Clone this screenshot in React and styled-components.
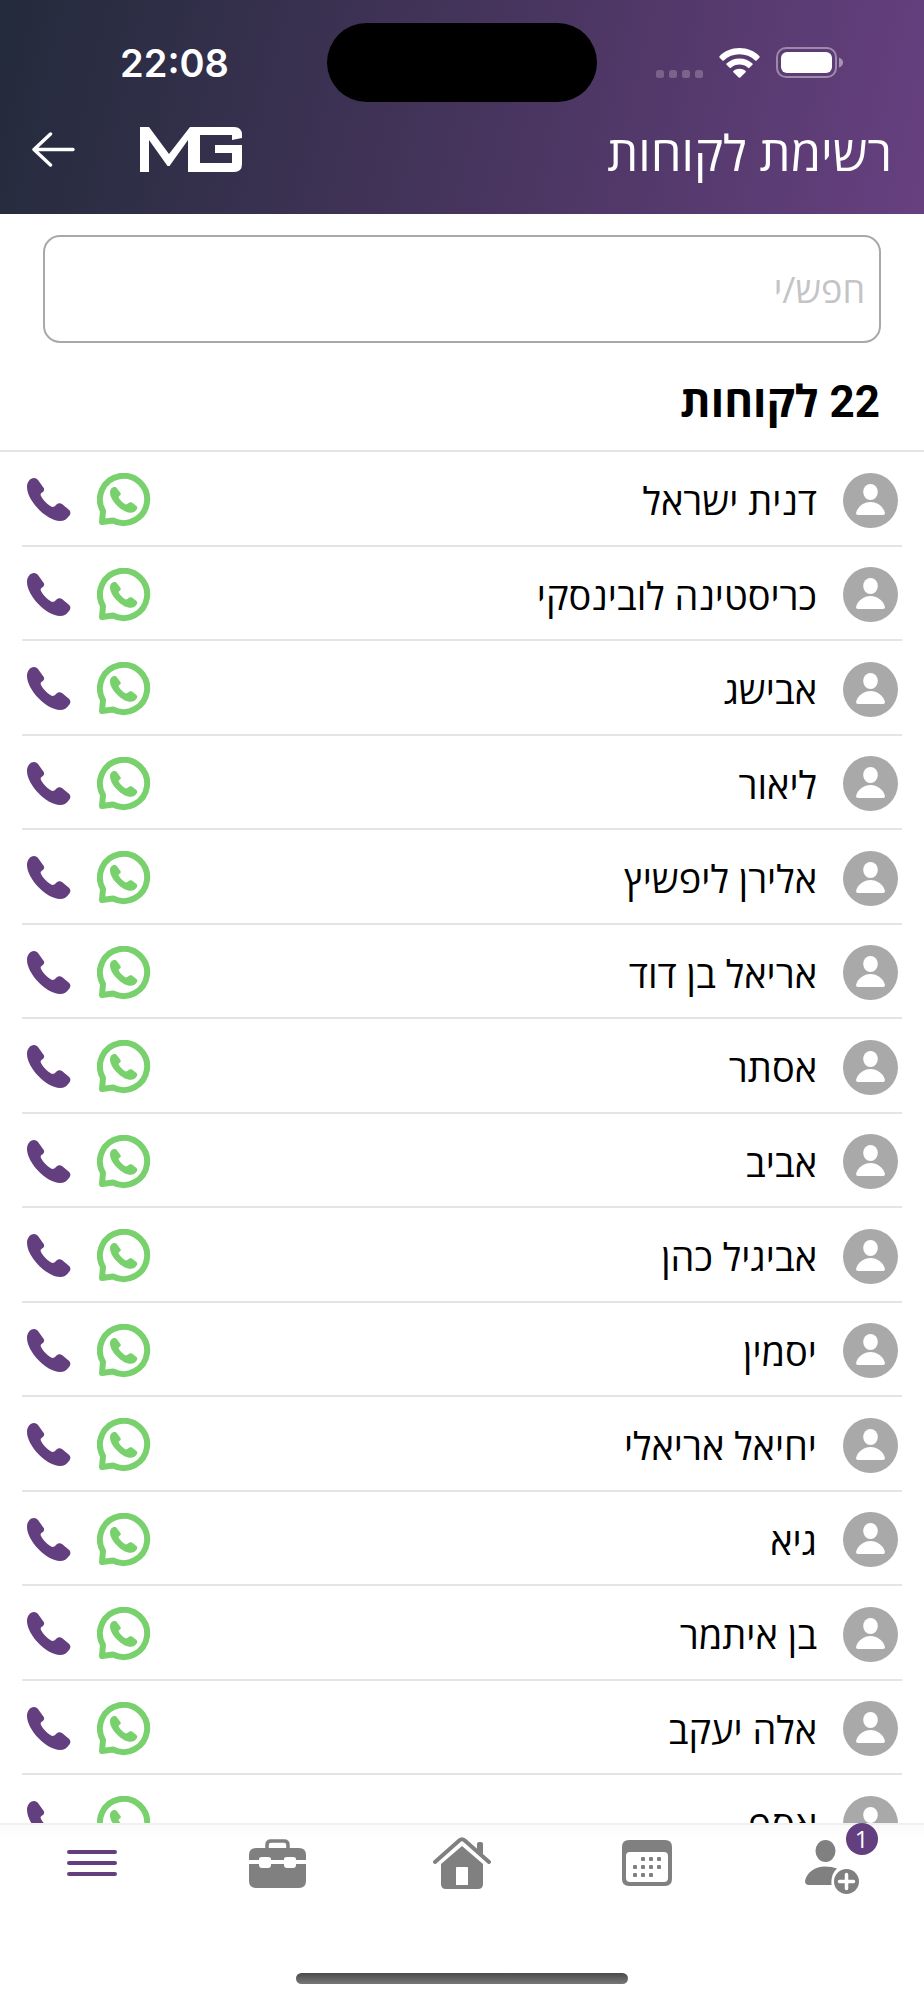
import React, { useState } from 'react';
import styled, { createGlobalStyle } from 'styled-components';

const GlobalStyle = createGlobalStyle`
  * {
    box-sizing: border-box;
  }
  body {
    margin: 0;
    background: #fff;
    color: #000;
    font-family: 'Open Sans', 'Liberation Sans', sans-serif;
  }
  button,
  input {
    font: inherit;
  }
`;

const Screen = styled.div`
  display: flex;
  flex-direction: column;
  height: 100vh;
  overflow: hidden;
`;

const Header = styled.header`
  flex: none;
  padding: 23px 0 18px;
  color: #fff;
  background: linear-gradient(103deg, #232b3b 0%, #45345c 50%, #674080 100%);
`;

const StatusBar = styled.div`
  display: grid;
  grid-template-columns: 1fr 270px 1fr;
  align-items: center;
  height: 79px;
`;

const Clock = styled.time`
  padding-left: 22px;
  text-align: center;
  font-family: 'Inter', sans-serif;
  font-size: 38px;
  line-height: 44px;
  font-weight: 600;
`;

const Island = styled.div`
  height: 79px;
  border-radius: 40px;
  background: #000;
`;

const StatusIcons = styled.div`
  display: flex;
  justify-content: flex-end;
  align-items: center;
  gap: 16px;
  padding-right: 81px;
`;

const TitleBar = styled.div`
  display: flex;
  align-items: center;
  height: 94px;
  padding: 0 32px;
`;

const Title = styled.h1`
  flex: 1;
  margin: 0;
  padding-top: 6px;
  font-size: 49px;
  line-height: 60px;
  font-weight: 400;
`;

const IconButton = styled.button`
  display: flex;
  padding: 0;
  border: 0;
  background: none;
  color: inherit;
`;

const Brand = styled.div`
  display: flex;
  margin-left: 65px;
`;

const SearchBox = styled.form`
  flex: none;
  padding: 21px 43px 0;
`;

const SearchInput = styled.input`
  display: block;
  width: 100%;
  height: 108px;
  padding: 0 14px;
  border: 2px solid #a9a9a9;
  border-radius: 17px;
  background: #fff;
  font-size: 36px;
  outline: none;

  &::placeholder {
    color: #c4c4c6;
    opacity: 1;
  }
`;

const Count = styled.h2`
  flex: none;
  display: flex;
  align-items: center;
  height: 109px;
  margin: 0;
  padding: 6px 44px 0;
  border-bottom: 2px solid #e4e4e4;
  font-family: 'Roboto', 'Open Sans', sans-serif;
  font-size: 44px;
  font-weight: 700;
`;

const List = styled.ul`
  flex: 1;
  min-height: 0;
  display: grid;
  grid-auto-rows: 95px 94px;
  margin: 0;
  padding: 0 22px;
  overflow-y: auto;
  scrollbar-width: none;
  list-style: none;
`;

const Row = styled.li`
  display: flex;
  align-items: center;
  gap: 26px;
  padding: 3px 4px 0 5px;
  border-bottom: 2px solid #e4e4e4;
`;

const Name = styled.span`
  flex: 1;
  font-size: 38px;
  line-height: 48px;
`;

const ActionLink = styled.a`
  display: flex;
  color: ${(props) => props.$color};
`;

const TabBar = styled.nav`
  flex: none;
  display: grid;
  grid-template-columns: repeat(5, 1fr);
  justify-items: center;
  align-items: center;
  height: 78px;
  border-top: 2px solid #f0f0f0;
  background: linear-gradient(#fafafa 0, #fff 14px);
`;

const Tab = styled(IconButton)`
  position: relative;
  color: ${(props) => (props.$active ? '#643f80' : '#808080')};
`;

const Badge = styled.span`
  position: absolute;
  top: -9px;
  right: -19px;
  width: 32px;
  border-radius: 16px;
  background: #643f80;
  color: #fff;
  font-size: 24px;
  line-height: 32px;
  text-align: center;
`;

const HomeArea = styled.div`
  flex: none;
  display: flex;
  justify-content: center;
  align-items: flex-end;
  height: 99px;
  padding-bottom: 16px;
`;

const HomeIndicator = styled.div`
  width: 36%;
  height: 11px;
  border-radius: 6px;
  background: linear-gradient(#4a4a4a, #787878);
`;

const PHONE =
  'M0 9C0 4 3 0 7 0C9 0 10 1 11 2L16 9C18 11 17 13 16 14C14 15 13 16 14 18C16 22 21 27 25 29C27 29 28 28 29 27C31 25 33 25 35 26L41 31C44 33 44 36 42 38C40 41 37 43 33 43C20 43 0 23 0 9Z';

const PhoneIcon = () => (
  <svg width="44" height="44" viewBox="0 0 44 44" fill="currentColor" aria-hidden="true">
    <path d={PHONE} />
  </svg>
);

const WhatsAppIcon = () => (
  <svg width="54" height="54" viewBox="0 0 54 54" aria-hidden="true">
    <path
      d="M6 38A23.6 23.6 0 1 1 16 47.5L5 49Z"
      fill="none"
      stroke="currentColor"
      strokeWidth="6"
      strokeLinejoin="round"
    />
    <path d={PHONE} transform="translate(13 14) scale(.63 .6)" fill="currentColor" />
  </svg>
);

const AvatarIcon = () => (
  <svg width="55" height="55" viewBox="0 0 55 55" aria-hidden="true">
    <circle cx="27.5" cy="27.5" r="27.5" fill="#a9a9a9" />
    <ellipse cx="27.5" cy="19" rx="7.3" ry="8" fill="#fff" />
    <path d="M13 40C15 33 21 29 27.5 29S40 33 42 40Q42 42 40 42H15Q13 42 13 40Z" fill="#fff" />
  </svg>
);

const BackIcon = () => (
  <svg width="43" height="35" viewBox="0 0 43 35" fill="none" stroke="currentColor" strokeWidth="3.4" strokeLinecap="round" strokeLinejoin="round" aria-hidden="true">
    <path d="M41 17.5H2M18.5 2L2 17.5L18.5 33" />
  </svg>
);

const Logo = () => (
  <svg width="102" height="45" viewBox="0 0 102 45" fill="currentColor" role="img" aria-label="MG">
    <path d="M0 0H9L29 27L50 0H94Q102 0 102 8V11L92 13V8H60V36H92V26H75V18H102V37Q102 45 94 45H48V13L29.5 39H27.5L9 13V45H0Z" />
  </svg>
);

const SignalIcon = () => (
  <svg width="47" height="30" viewBox="0 0 47 30" fill="#fff" fillOpacity=".22" aria-hidden="true">
    {[0, 13, 26, 39].map((x) => (
      <rect key={x} x={x} y="22" width="8" height="8" rx="2.5" />
    ))}
  </svg>
);

const WifiIcon = () => (
  <svg width="41" height="30" viewBox="0 0 41 30" fill="#fff" aria-hidden="true">
    <path d="M20.5 0C28.5 0 35.5 3 40.5 8.2Q41 9 40.5 9.6L37.6 12.5Q37 13 36.2 12.5C32 8.5 26.5 6.3 20.5 6.3S9 8.5 4.8 12.5Q4 13 3.4 12.5L.5 9.6Q0 9 .5 8.2C5.5 3 12.5 0 20.5 0Z" />
    <path d="M20.5 10.5C25.5 10.5 30 12.4 33.5 15.5Q34 16.2 33.5 16.8L30.4 19.7Q29.8 20.2 29 19.7C26.7 17.6 23.7 16.5 20.5 16.5S14.3 17.6 12 19.7Q11.2 20.2 10.6 19.7L7.5 16.8Q7 16.2 7.5 15.5C11 12.4 15.5 10.5 20.5 10.5Z" />
    <path d="M20.5 20.8C22.8 20.8 25 21.6 26.6 23Q27.2 23.7 26.6 24.3L21.3 29.5Q20.5 30.2 19.7 29.5L14.4 24.3Q13.8 23.7 14.4 23C16 21.6 18.2 20.8 20.5 20.8Z" />
  </svg>
);

const BatteryIcon = () => (
  <svg width="67" height="31" viewBox="0 0 67 31" aria-hidden="true">
    <rect x="1" y="1" width="59" height="29" rx="9" fill="none" stroke="#fff" strokeOpacity=".4" strokeWidth="2" />
    <rect x="5" y="5" width="51" height="21" rx="6" fill="#fff" />
    <path d="M63 10.5Q67 12 67 15.5T63 20.5Z" fill="#fff" fillOpacity=".45" />
  </svg>
);

const MenuIcon = () => (
  <svg width="50" height="28" viewBox="0 0 50 28" stroke="currentColor" strokeWidth="4" strokeLinecap="round" aria-hidden="true">
    <path d="M2 3H48M2 14H48M2 25H48" />
  </svg>
);

const BriefcaseIcon = () => (
  <svg width="57" height="49" viewBox="0 0 57 49" fill="currentColor" aria-hidden="true">
    <path d="M18 12V6Q18 2 22 2H35Q39 2 39 6V12" fill="none" stroke="currentColor" strokeWidth="3.5" />
    <path d="M7 9H50Q57 9 57 16V21H47V20Q47 18 44 18H38Q35 18 35 20V21H22V20Q22 18 19 18H13Q10 18 10 20V21H0V16Q0 9 7 9Z" />
    <path d="M0 25H10V26Q10 29 13 29H19Q22 29 22 26V25H35V26Q35 29 38 29H44Q47 29 47 26V25H57V42Q57 49 50 49H7Q0 49 0 42Z" />
  </svg>
);

const HouseIcon = () => (
  <svg width="58" height="52" viewBox="0 0 58 52" fill="currentColor" aria-hidden="true">
    <path d="M2 25L26.5 3.2Q29 1.2 31.5 3.2L56 25" fill="none" stroke="currentColor" strokeWidth="4" strokeLinecap="round" />
    <path d="M44 7Q44 5 46 5H48Q50 5 50 7V19L44 14Z" />
    <path fillRule="evenodd" d="M8 27L29 9L50 27V47Q50 52 45 52H13Q8 52 8 47ZM24 30Q23 30 23 31V48H35V31Q35 30 34 30Z" />
  </svg>
);

const CalendarIcon = () => (
  <svg width="50" height="46" viewBox="0 0 50 46" fill="currentColor" aria-hidden="true">
    <path
      fillRule="evenodd"
      d="M7 0H43Q50 0 50 7V39Q50 46 43 46H7Q0 46 0 39V7Q0 0 7 0ZM8 12Q4 12 4 16V38Q4 42 8 42H42Q46 42 46 38V16Q46 12 42 12Z"
    />
    {[[19, 17], [27, 17], [35, 17], [11, 25], [19, 25], [27, 25], [35, 25], [11, 33], [19, 33], [27, 33]].map(([x, y]) => (
      <rect key={`${x}-${y}`} x={x} y={y} width="4" height="4" rx="1" />
    ))}
  </svg>
);

const AddUserIcon = () => (
  <svg width="54" height="62" viewBox="0 -8 54 62" fill="currentColor" aria-hidden="true">
    <ellipse cx="20.5" cy="11" rx="10" ry="11" />
    <path d="M4 45Q0 45 0 41C2 32 10 26.5 20 26.5Q27 26.5 32 28.5C28 32 26 37 26.5 45Z" />
    <circle cx="41.5" cy="41.5" r="12.5" />
    <path d="M41.5 34.5V48.5M34.5 41.5H48.5" stroke="#fff" strokeWidth="3.5" strokeLinecap="round" />
  </svg>
);

const customers = [
  'דנית ישראל',
  'כריסטינה לובינסקי',
  'אבישג',
  'ליאור',
  'אלירן ליפשיץ',
  'אריאל בן דוד',
  'אסתר',
  'אביב',
  'אביגיל כהן',
  'יסמין',
  'יחיאל אריאלי',
  'גיא',
  'בן איתמר',
  'אלה יעקב',
  'אסף',
];

const tabs = [
  { label: 'לקוח חדש', icon: <AddUserIcon />, badge: 1 },
  { label: 'יומן', icon: <CalendarIcon /> },
  { label: 'בית', icon: <HouseIcon /> },
  { label: 'עסק', icon: <BriefcaseIcon /> },
  { label: 'תפריט', icon: <MenuIcon />, active: true },
];

const App = () => {
  const [query, setQuery] = useState('');
  const visible = customers.filter((name) => name.includes(query));

  return (
    <Screen dir="rtl" lang="he">
      <GlobalStyle />
      <Header>
        <StatusBar dir="ltr">
          <Clock>22:08</Clock>
          <Island />
          <StatusIcons>
            <SignalIcon />
            <WifiIcon />
            <BatteryIcon />
          </StatusIcons>
        </StatusBar>
        <TitleBar>
          <Title>רשימת לקוחות</Title>
          <Brand>
            <Logo />
          </Brand>
          <IconButton type="button" aria-label="חזרה">
            <BackIcon />
          </IconButton>
        </TitleBar>
      </Header>

      <SearchBox role="search" onSubmit={(e) => e.preventDefault()}>
        <SearchInput
          type="text"
          aria-label="חיפוש לקוחות"
          placeholder="חפש/י"
          value={query}
          onChange={(e) => setQuery(e.target.value)}
        />
      </SearchBox>

      <Count>22 לקוחות</Count>

      <List>
        {visible.map((name) => (
          <Row key={name}>
            <AvatarIcon />
            <Name>{name}</Name>
            <ActionLink href="#whatsapp" $color="#79d16d" aria-label={`וואטסאפ ${name}`}>
              <WhatsAppIcon />
            </ActionLink>
            <ActionLink href="#call" $color="#643f80" aria-label={`חיוג ${name}`}>
              <PhoneIcon />
            </ActionLink>
          </Row>
        ))}
      </List>

      <TabBar>
        {tabs.map((tab) => (
          <Tab key={tab.label} type="button" $active={tab.active} aria-label={tab.label}>
            {tab.icon}
            {tab.badge && <Badge>{tab.badge}</Badge>}
          </Tab>
        ))}
      </TabBar>
      <HomeArea>
        <HomeIndicator />
      </HomeArea>
    </Screen>
  );
};

export default App;
